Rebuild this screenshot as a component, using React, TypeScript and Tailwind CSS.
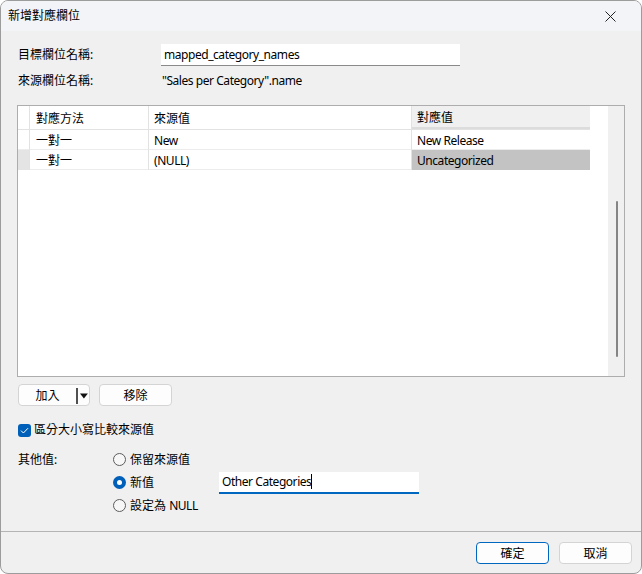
import React from 'react';

const font = "font-['Segoe_UI','Noto_Sans','Noto_Sans_CJK_TC',sans-serif]";
// Latin runs are a touch narrower in the original font
const lat = 'tracking-[-0.45px]';

const rows = [
  { method: '一對一', source: 'New', target: 'New Release', current: false },
  { method: '一對一', source: '(NULL)', target: 'Uncategorized', current: true },
];

function Radio({ checked }: { checked?: boolean }) {
  if (checked) {
    return (
      <span className="w-[13px] h-[13px] rounded-full bg-[#005fb8] flex items-center justify-center shrink-0">
        <span className="w-[5px] h-[5px] rounded-full bg-white" />
      </span>
    );
  }
  return <span className="w-[13px] h-[13px] rounded-full border border-[#5c5c5c] bg-[#f7f7f7] shrink-0" />;
}

function Button({ children, primary, className = '' }: { children: React.ReactNode; primary?: boolean; className?: string }) {
  return (
    <div
      className={`h-[22px] rounded-[4px] bg-[#fdfdfd] border flex items-center justify-center pt-[1px] ${
        primary ? 'border-[#0067c0]' : 'border-[#d4d4d4]'
      } ${className}`}
    >
      {children}
    </div>
  );
}

export default function App() {
  return (
    <div className={`${font} text-[12px] text-black w-[642px] h-[574px] border border-[#9c9c9c] rounded-[8px] overflow-hidden bg-[#f0f0f0] flex flex-col`}>
      {/* title bar */}
      <div className="h-[30px] bg-[#f3f4f7] flex items-center justify-between pl-[7px] pr-[25px] shrink-0">
        <span>新增對應欄位</span>
        <svg width="11" height="11" viewBox="0 0 11 11">
          <path d="M0.5 0.5 L10.5 10.5 M10.5 0.5 L0.5 10.5" stroke="#222" strokeWidth="1" />
        </svg>
      </div>

      <div className="flex-1 px-[16px]">
        <div className="flex items-center h-[22px] mt-[13px]">
          <span className="w-[144px] pl-[1px]">目標欄位名稱:</span>
          <div className={`w-[299px] h-[22px] bg-white border-b border-[#8a8a8a] flex items-center pl-[3px] ${lat}`}>
            mapped_category_names
          </div>
        </div>
        <div className="flex items-center h-[22px] mt-[4px]">
          <span className="w-[144px] pl-[1px]">來源欄位名稱:</span>
          <span className={`pl-[1px] ${lat}`}>"Sales per Category".name</span>
        </div>

        {/* mapping table */}
        <div className="mt-[13px] w-[608px] h-[272px] border border-[#adadad] bg-white flex">
          <div className="flex-1">
            <div className="grid grid-cols-[12px_119px_263px_178px] w-[572px] h-[24px] border-b border-[#e2e2e2]">
              <div className="border-r border-[#e2e2e2]" />
              <div className="border-r border-[#e2e2e2] flex items-center pl-[6px] pt-[2px]">對應方法</div>
              <div className="border-r border-[#e2e2e2] flex items-center pl-[5px] pt-[2px]">來源值</div>
              <div className="bg-[#f0f0f0] border-b-2 border-[#dcdcdc] flex items-center pl-[5px] pt-[2px]">對應值</div>
            </div>
            {rows.map((r, i) => (
              <div key={i} className="grid grid-cols-[12px_119px_263px_178px] w-[572px] h-[20px] border-b border-[#ececec]">
                <div className={`border-r border-[#e2e2e2] ${r.current ? 'bg-[#e4e4e4]' : ''}`} />
                <div className="border-r border-[#e2e2e2] flex items-center pl-[6px] pt-[2px]">{r.method}</div>
                <div className={`border-r border-[#e2e2e2] flex items-center pl-[5px] pt-[2px] ${lat}`}>{r.source}</div>
                <div className={`flex items-center pl-[5px] pt-[2px] ${lat} ${r.current ? 'bg-[#c3c3c3]' : ''}`}>{r.target}</div>
              </div>
            ))}
          </div>
          <div className="w-[16px] bg-[#f0f0f0] flex justify-center pt-[95px] pl-[2px]">
            <div className="w-[2px] h-[156px] rounded-full bg-[#858585]" />
          </div>
        </div>

        {/* add / remove */}
        <div className="flex gap-[9px] mt-[7px] pl-[1px]">
          <Button className="w-[72px] justify-start">
            <span className="w-[58px] text-center">加入</span>
            <span className="w-[2px] h-[16px] bg-[#505050]" />
            <svg width="10" height="6" viewBox="0 0 10 6" className="ml-[1px]">
              <path d="M1 0.5 H9 L5 5.5 Z" fill="#111" />
            </svg>
          </Button>
          <Button className="w-[73px]">移除</Button>
        </div>

        <div className="flex items-center h-[20px] mt-[14px] pl-[1px] gap-[3px]">
          <span className="w-[13px] h-[13px] rounded-[3px] bg-[#005fb8] flex items-center justify-center">
            <svg width="9" height="7" viewBox="0 0 9 7">
              <path d="M1 3.6 L3.4 6 L8 1.2" stroke="white" strokeWidth="1" fill="none" />
            </svg>
          </span>
          <span>區分大小寫比較來源值</span>
        </div>

        <div className="flex mt-[8px] pl-[1px]">
          <span className="w-[95px] h-[23px] flex items-center">其他值:</span>
          <div className="flex flex-col">
            <div className="flex items-center h-[23px] gap-[4px]">
              <Radio />
              <span>保留來源值</span>
            </div>
            <div className="flex items-center h-[23px]">
              <div className="w-[106px] flex items-center gap-[4px]">
                <Radio checked />
                <span>新值</span>
              </div>
              <div className={`w-[200px] h-[22px] bg-white border-b-2 border-[#0067c0] flex items-center pl-[3px] ${lat}`}>
                Other Categories<span className="w-[1px] h-[15px] bg-black" />
              </div>
            </div>
            <div className="flex items-center h-[23px] gap-[4px]">
              <Radio />
              <span>
                設定為 <span className={lat}>NULL</span>
              </span>
            </div>
          </div>
        </div>
      </div>

      {/* footer */}
      <div className="h-[42px] border-t border-[#b4b4b4] flex items-start justify-end gap-[10px] pt-[10px] pr-[9px] shrink-0">
        <Button primary className="w-[73px]">確定</Button>
        <Button className="w-[73px]">取消</Button>
      </div>
    </div>
  );
}
